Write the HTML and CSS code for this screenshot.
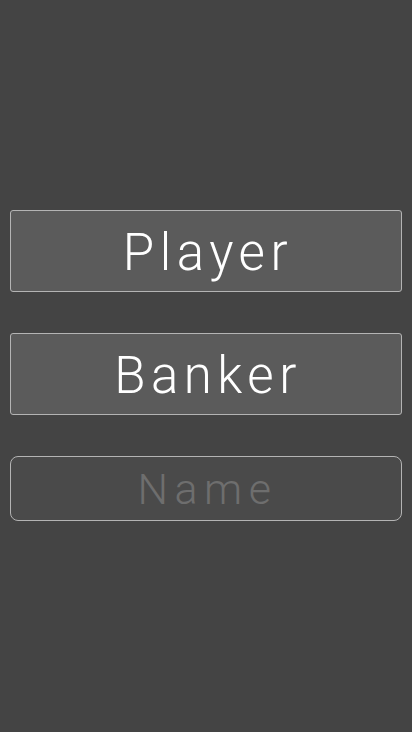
FILE: index.html
```html
<!DOCTYPE html>
<html>
<head>
<meta charset="utf-8">
<link rel="stylesheet" href="styles.css">
</head>
<body>
<main class="screen">
  <div class="stack">
    <button class="choice">Player</button>
    <button class="choice">Banker</button>
    <input class="name" type="text" placeholder="Name">
  </div>
</main>
</body>
</html>
```
FILE: styles.css
```css
html, body {
  margin: 0;
  padding: 0;
  height: 100%;
  background: #444444;
}
.screen {
  height: 732px;
  display: flex;
  align-items: center;
  justify-content: center;
  padding: 0 10px;
  box-sizing: border-box;
}
.stack {
  width: 100%;
  display: flex;
  flex-direction: column;
  gap: 41px;
  margin-top: -1px;
}
.choice {
  height: 82px;
  width: 100%;
  margin: 0;
  background: #5b5b5b;
  border: 1px solid #b4b4b4;
  border-radius: 3px;
  color: #ffffff;
  font-family: Roboto, "Liberation Sans", sans-serif;
  font-weight: 300;
  font-size: 51px;
  letter-spacing: 5.5px;
  padding: 2px 0 0 4px;
}
.name {
  height: 65px;
  width: 100%;
  margin: 0;
  box-sizing: border-box;
  background: #4a4a4a;
  border: 1px solid #b4b4b4;
  border-radius: 8px;
  color: #ffffff;
  text-align: center;
  font-family: Roboto, "Liberation Sans", sans-serif;
  font-weight: 300;
  font-size: 43px;
  letter-spacing: 6.5px;
  padding: 0 0 0 3px;
  outline: none;
}
.name::placeholder {
  color: #6e6e6e;
}
```
